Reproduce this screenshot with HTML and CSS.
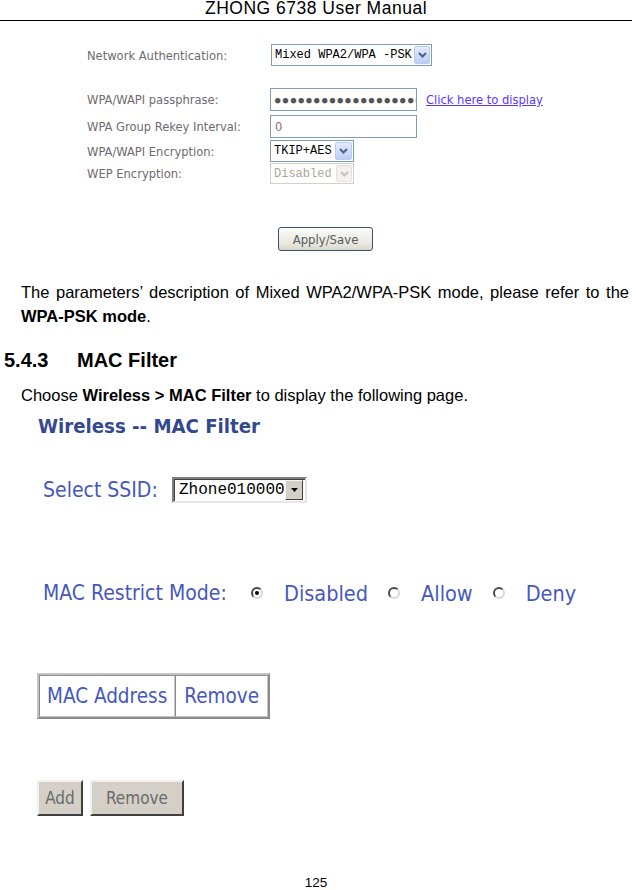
FILE: index.html
```html
<!DOCTYPE html>
<html lang="en">
<head>
<meta charset="utf-8">
<title>ZHONG 6738 User Manual - MAC Filter</title>
<link rel="stylesheet" href="styles.css">
</head>
<body>
<header class="doc-header">ZHONG 6738 User Manual</header>

<section class="wpa">
  <div class="wpa-row row-auth">
    <span class="wpa-label">Network Authentication:</span>
    <div class="xp-select sel-auth">
      <span class="xp-value">Mixed WPA2/WPA -PSK</span>
      <span class="xp-arrow"><svg width="9" height="6" viewBox="0 0 9 6"><path d="M1 1L4.5 4.5L8 1" stroke="#4d6185" stroke-width="2" fill="none"/></svg></span>
    </div>
  </div>
  <div class="wpa-row row-pass">
    <span class="wpa-label">WPA/WAPI passphrase:</span>
    <div class="xp-input pass"><span class="dots">●●●●●●●●●●●●●●●●●●●</span></div>
    <a class="show-link" href="#">Click here to display</a>
  </div>
  <div class="wpa-row row-rekey">
    <span class="wpa-label">WPA Group Rekey Interval:</span>
    <div class="xp-input rekey"><span class="rekey-val">0</span></div>
  </div>
  <div class="wpa-row row-enc">
    <span class="wpa-label">WPA/WAPI Encryption:</span>
    <div class="xp-select sel-enc">
      <span class="xp-value">TKIP+AES</span>
      <span class="xp-arrow"><svg width="9" height="6" viewBox="0 0 9 6"><path d="M1 1L4.5 4.5L8 1" stroke="#4d6185" stroke-width="2" fill="none"/></svg></span>
    </div>
  </div>
  <div class="wpa-row row-wep">
    <span class="wpa-label">WEP Encryption:</span>
    <div class="xp-select sel-wep disabled">
      <span class="xp-value">Disabled</span>
      <span class="xp-arrow"><svg width="9" height="6" viewBox="0 0 9 6"><path d="M1 1L4.5 4.5L8 1" stroke="#c4c3bb" stroke-width="2" fill="none"/></svg></span>
    </div>
  </div>
  <div class="apply-wrap"><button class="apply-btn" type="button">Apply/Save</button></div>
</section>

<p class="body-text para">The parameters’ description of Mixed WPA2/WPA-PSK mode, please refer to the <b>WPA-PSK mode</b>.</p>

<h2 class="section-head"><span class="sec-num">5.4.3</span>MAC Filter</h2>

<p class="body-text choose">Choose <b>Wireless &gt; MAC Filter</b> to display the following page.</p>

<section class="macf">
  <h3 class="macf-title">Wireless -- MAC Filter</h3>
  <div class="macf-row ssid-row">
    <span class="macf-label">Select SSID:</span>
    <div class="classic-select">
      <span class="cs-value">Zhone010000</span>
      <span class="cs-arrow"><svg width="7" height="4" viewBox="0 0 7 4"><path d="M0 0H7L3.5 4Z" fill="#000"/></svg></span>
    </div>
  </div>
  <div class="macf-row mode-row">
    <span class="macf-label mode-label">MAC Restrict Mode:</span>
    <span class="radio checked"></span><span class="radio-text">Disabled</span>
    <span class="radio"></span><span class="radio-text">Allow</span>
    <span class="radio"></span><span class="radio-text">Deny</span>
  </div>
  <table class="mac-table">
    <tr><td class="c-mac">MAC Address</td><td class="c-rem">Remove</td></tr>
  </table>
  <div class="btn-row">
    <button class="classic-btn btn-add" type="button">Add</button>
    <button class="classic-btn btn-remove" type="button">Remove</button>
  </div>
</section>

<footer class="page-num">125</footer>
</body>
</html>
```

FILE: styles.css
```css
html, body { margin: 0; padding: 0; background: #fff; }
body { width: 632px; height: 889px; overflow: hidden; font-family: "Liberation Sans", Arial, sans-serif; color: #000; }

.doc-header {
  height: 21px;
  box-sizing: border-box;
  border-bottom: 1px solid #000;
  text-align: center;
  font-size: 17.5px;
  letter-spacing: 0.5px;
  line-height: 17px;
}

/* ---------- WPA screenshot ---------- */
.wpa { padding: 23px 0 0 87px; font-family: "DejaVu Sans Condensed", "DejaVu Sans", sans-serif; }
.wpa-row { display: flex; align-items: center; }
.wpa-label { width: 183px; flex: none; font-size: 12.8px; color: #6f6b70; }
.row-auth { height: 22px; }
.row-pass { height: 23px; margin-top: 22px; }
.row-rekey { height: 23px; margin-top: 4px; }
.row-enc { height: 22px; margin-top: 2px; }
.row-wep { height: 21px; margin-top: 1px; }

.xp-select {
  height: 100%;
  box-sizing: border-box;
  border: 1px solid #7f9db9;
  background: #fff;
  display: flex;
  align-items: stretch;
}
.xp-value {
  flex: 1;
  font-family: "Liberation Mono", monospace;
  font-size: 12px;
  padding-left: 3px;
  display: flex;
  align-items: center;
  color: #000;
  white-space: nowrap;
}
.xp-arrow {
  width: 14px;
  margin: 1px;
  border: 1px solid #b9cbf0;
  border-radius: 2px;
  background: linear-gradient(#e3ebfd, #bccdf5);
  display: flex;
  align-items: center;
  justify-content: center;
}
.sel-auth { width: 161px; margin-left: 1px; }
.sel-enc { width: 84px; }
.sel-enc .xp-arrow { width: 15px; }
.sel-wep { width: 84px; }
.xp-select.disabled { border-color: #d4d2c6; }
.xp-select.disabled .xp-value { color: #aca899; }
.xp-select.disabled .xp-arrow { background: #f3f2ee; border-color: #e4e2da; }

.xp-input {
  height: 100%;
  width: 147px;
  flex: none;
  box-sizing: border-box;
  border: 1px solid #7f9db9;
  background: #fff;
  overflow: hidden;
  display: flex;
  align-items: center;
  white-space: nowrap;
}
.dots { font-family: "DejaVu Sans Mono", monospace; font-size: 9px; letter-spacing: 2.4px; color: #555; padding-left: 4px; }
.rekey-val { font-size: 12.8px; color: #8a6e6a; padding-left: 4px; }
.show-link { margin-left: 9px; font-size: 12.8px; color: #5a37ff; text-decoration: underline; white-space: nowrap; }

.apply-wrap { padding: 43px 0 0 191px; }
.apply-btn {
  display: block;
  width: 95px;
  height: 24px;
  padding: 0;
  box-sizing: border-box;
  border: 1px solid #36506e;
  border-radius: 3px;
  background: linear-gradient(#fbfbf8, #e9e8e1 70%, #d8d6cc);
  font-family: "DejaVu Sans Condensed", "DejaVu Sans", sans-serif;
  font-size: 13px;
  color: #5a5a5a;
}

/* ---------- document text ---------- */
.body-text { margin: 0; font-size: 16.5px; line-height: 24px; }
.para { margin-top: 29px; padding: 0 3px 0 21px; text-align: justify; }
.choose { margin-top: 11px; padding-left: 21px; }
.section-head { margin: 20px 0 0; padding-left: 4px; font-size: 20px; line-height: 24px; font-weight: bold; }
.sec-num { display: inline-block; width: 73px; }

/* ---------- MAC filter screenshot ---------- */
.macf { padding-left: 38px; font-family: "DejaVu Sans Condensed", "DejaVu Sans", sans-serif; }
.macf-title { margin: 7px 0 0; font-size: 20.2px; line-height: 24px; font-weight: bold; color: #33498f; }
.macf-row { display: flex; align-items: center; height: 26px; padding-left: 5px; }
.macf-label { font-size: 21px; color: #4658bd; white-space: nowrap; flex: none; }
.ssid-row { margin-top: 39px; }
.ssid-row .macf-label { width: 129px; }
.classic-select {
  width: 135px;
  height: 26px;
  box-sizing: border-box;
  border: 2px solid;
  border-color: #808080 #e8e8e8 #e8e8e8 #808080;
  box-shadow: inset 1px 1px 0 #404040;
  background: #fff;
  display: flex;
  align-items: center;
}
.cs-value { flex: 1; font-family: "Liberation Mono", monospace; font-size: 16px; padding-left: 5px; color: #000; }
.cs-arrow {
  width: 18px;
  height: 20px;
  margin-right: 2px;
  box-sizing: border-box;
  background: #d4d0c8;
  border: 1px solid;
  border-color: #f4f4f4 #404040 #404040 #f4f4f4;
  display: flex;
  align-items: center;
  justify-content: center;
}

.mode-row { margin-top: 77px; }
.mode-label { width: 208px; }
.radio {
  width: 12px;
  height: 12px;
  box-sizing: border-box;
  border-radius: 50%;
  border: 2px solid;
  border-color: #4a4a4a #d8d8d8 #d8d8d8 #4a4a4a;
  background: #fff;
  position: relative;
  flex: none;
}
.radio.checked::after {
  content: "";
  position: absolute;
  left: 2px; top: 2px;
  width: 4px; height: 4px;
  border-radius: 50%;
  background: #000;
}
.radio-text { font-size: 21.5px; color: #4658bd; margin: 0 20px 0 21px; white-space: nowrap; }

.mac-table {
  margin-top: 67px;
  margin-left: -1px;
  border-collapse: separate;
  border-spacing: 0;
  border: 2px solid;
  border-color: #c4c4c4 #8c8c8c #8c8c8c #c4c4c4;
}
.mac-table td {
  border: 1px solid;
  border-color: #8c8c8c #c4c4c4 #c4c4c4 #8c8c8c;
  font-size: 20.5px;
  color: #4658bd;
  height: 40px;
  padding: 0 7px;
  white-space: nowrap;
}
.mac-table .c-rem { padding: 0 8px; }

.btn-row { display: flex; gap: 7px; margin-top: 61px; margin-left: -1px; }
.classic-btn {
  height: 36px;
  padding: 0;
  box-sizing: border-box;
  background: #d4d0c8;
  border: 2px solid;
  border-color: #f0f0f0 #404040 #404040 #f0f0f0;
  font-family: "DejaVu Sans Condensed", "DejaVu Sans", sans-serif;
  font-size: 17px;
  color: #6a6a6a;
}
.btn-add { width: 46px; }
.btn-remove { width: 94px; }

.page-num { margin-top: 59px; text-align: center; font-size: 13.5px; line-height: 16px; }
```
